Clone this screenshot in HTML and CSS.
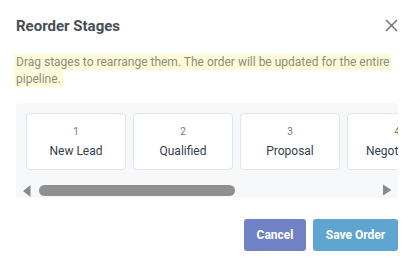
FILE: index.html
```html
<!DOCTYPE html>
<html lang="en">
<head>
    <meta charset="UTF-8">
    <meta name="viewport" content="width=device-width, initial-scale=1.0">
    <title>Reorder Stages</title>
    <link rel="stylesheet" href="styles.css">
</head>
<body>
    <div class="modal">
        <div class="modal-header">
            <h3 class="modal-title">Reorder Stages</h3>
            <button class="close-btn" aria-label="Close">
                <svg width="13" height="13" viewBox="0 0 13 13" fill="none" xmlns="http://www.w3.org/2000/svg">
                    <path d="M1 1L12 12M12 1L1 12" stroke="#6b6b6b" stroke-width="1.4"/>
                </svg>
            </button>
        </div>
        <p class="hint"><span>Drag stages to rearrange them. The order will be updated for the entire pipeline.</span></p>

        <div class="stage-scroll">
            <div class="stages">
                <div class="stage"><span class="stage-num">1</span><span class="stage-name">New Lead</span></div>
                <div class="stage"><span class="stage-num">2</span><span class="stage-name">Qualified</span></div>
                <div class="stage"><span class="stage-num">3</span><span class="stage-name">Proposal</span></div>
                <div class="stage"><span class="stage-num">4</span><span class="stage-name">Negotiation</span></div>
                <div class="stage"><span class="stage-num">5</span><span class="stage-name">Closed Won</span></div>
                <div class="stage"><span class="stage-num">6</span><span class="stage-name">Closed Lost</span></div>
            </div>
            <!-- scrollbar drawn by hand, headless hides the native one -->
            <div class="scrollbar">
                <svg class="arrow" width="15" height="15" viewBox="0 0 15 15" xmlns="http://www.w3.org/2000/svg">
                    <polygon points="14.5,2 14.5,14 7,8" fill="#8a8a8a"/>
                </svg>
                <div class="track"><div class="thumb"></div></div>
                <svg class="arrow" width="15" height="15" viewBox="0 0 15 15" xmlns="http://www.w3.org/2000/svg">
                    <polygon points="0,1.5 0,12.5 8.5,7" fill="#8a8a8a"/>
                </svg>
            </div>
        </div>

        <div class="modal-footer">
            <button class="btn btn-cancel">Cancel</button>
            <button class="btn btn-save">Save Order</button>
        </div>
    </div>
</body>
</html>
```

FILE: styles.css
```css
*
{
    box-sizing: border-box;
    margin: 0;
    padding: 0;
}
body
{
    background: #fff;
    font-family: Roboto, "Noto Sans", sans-serif;
}
.modal
{
    width: 413px;
    padding: 16px 15px 0 16px;
}
.modal-header
{
    display: flex;
    justify-content: space-between;
    align-items: center;
    height: 19px;
}
.modal-title
{
    font-size: 15px;
    font-weight: 700;
    color: #474d56;
}
.close-btn
{
    border: none;
    background: none;
    display: flex;
    cursor: pointer;
}
.hint
{
    margin-top: 19px;
    font-size: 12px;
    line-height: 17px;
    color: #8b8b80;
}
.hint span
{
    background: #fffbd8;
    padding: 1px 2px;
    box-decoration-break: clone;
    -webkit-box-decoration-break: clone;
    margin-left: -2px;
}
.stage-scroll
{
    margin-top: 15px;
    background: #f7f8fa;
    border-radius: 3px;
}
.stages
{
    display: flex;
    gap: 7px;
    padding: 10px 10px 13px;
    overflow: hidden;
}
.stage
{
    flex: 0 0 100px;
    height: 57px;
    background: #fff;
    border: 1px solid #e2e5e9;
    border-radius: 4px;
    display: flex;
    flex-direction: column;
    align-items: center;
    justify-content: center;
    gap: 6px;
    padding-top: 1px;
}
.stage-num
{
    font-size: 10px;
    color: #777;
    line-height: 12px;
}
.stage-name
{
    font-size: 12px;
    color: #34404e;
    line-height: 15px;
}
.scrollbar
{
    display: flex;
    height: 15px;
}
.arrow
{
    flex: 0 0 15px;
}
.track
{
    flex: 1;
    padding: 2px 0 2px 8px;
}
.thumb
{
    width: 196px;
    height: 11px;
    background: #8f8f8f;
    border-radius: 6px;
}
.modal-footer
{
    display: flex;
    justify-content: flex-end;
    gap: 7px;
    margin-top: 21px;
}
.btn
{
    height: 32px;
    border: none;
    border-radius: 3px;
    color: #fff;
    font-family: inherit;
    font-size: 12px;
    font-weight: 700;
    cursor: pointer;
}
.btn-cancel
{
    width: 62px;
    background: #7282c6;
}
.btn-save
{
    width: 85px;
    background: #5ea5cf;
}
```
